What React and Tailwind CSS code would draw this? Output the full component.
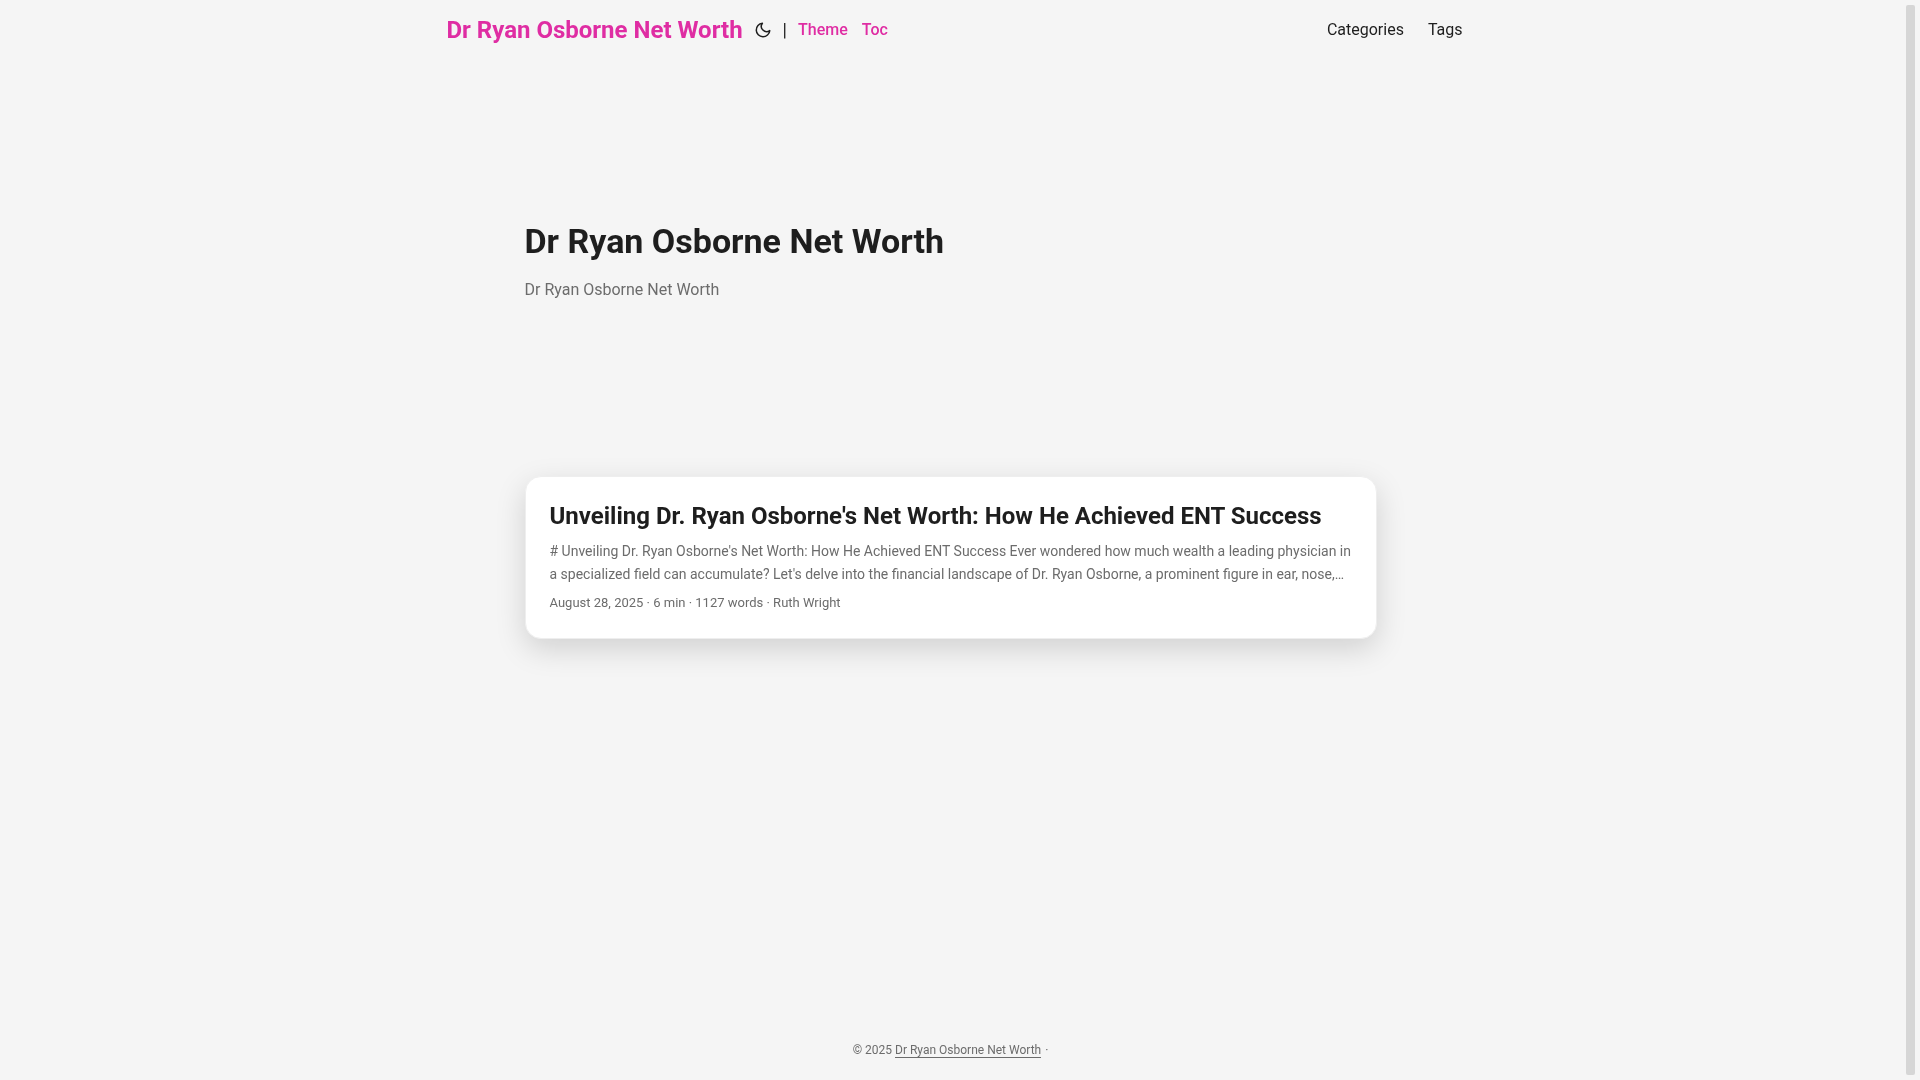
import React, { useState } from 'react';

const SITE_NAME = 'Dr Ryan Osborne Net Worth';

const quickLinks = [
  { label: 'Theme', href: '#theme' },
  { label: 'Toc', href: '#toc' },
];

const menu = [
  { label: 'Categories', href: '#categories' },
  { label: 'Tags', href: '#tags' },
];

const posts = [
  {
    href: '#post',
    title: "Unveiling Dr. Ryan Osborne's Net Worth: How He Achieved ENT Success",
    summary:
      "# Unveiling Dr. Ryan Osborne's Net Worth: How He Achieved ENT Success Ever wondered how much wealth a leading physician in a specialized field can accumulate? Let's delve into the financial landscape of Dr. Ryan Osborne, a prominent figure in ear, nose,…",
    meta: 'August 28, 2025 · 6 min · 1127 words · Ruth Wright',
  },
];

const MoonIcon = () => (
  <svg
    width="18"
    height="18"
    viewBox="0 0 24 24"
    fill="none"
    stroke="currentColor"
    strokeWidth="2"
    strokeLinecap="round"
    strokeLinejoin="round"
    aria-hidden="true"
  >
    <path d="M21 12.79A9 9 0 1 1 11.21 3 7 7 0 0 0 21 12.79z" />
  </svg>
);

const Header = ({ onToggle }) => (
  <header className="mx-auto flex h-[60px] w-full max-w-[1072px] items-center justify-between px-6">
    <div className="flex items-center pl-2">
      <a href="#home" className="text-2xl font-bold text-[#df2da3]">
        {SITE_NAME}
      </a>
      <div className="ml-[11px] flex items-center gap-[11px]">
        <button type="button" onClick={onToggle} aria-label="Toggle theme" className="cursor-pointer">
          <MoonIcon />
        </button>
        <span className="text-lg">|</span>
        <nav className="flex gap-[14px] font-medium text-[#df2da3]">
          {quickLinks.map((link) => (
            <a key={link.label} href={link.href}>
              {link.label}
            </a>
          ))}
        </nav>
      </div>
    </div>
    <ul className="flex gap-6">
      {menu.map((item) => (
        <li key={item.label}>
          <a href={item.href}>{item.label}</a>
        </li>
      ))}
    </ul>
  </header>
);

const PostCard = ({ post }) => (
  <article className="rounded-2xl border border-[#eeeeee] bg-white p-6 shadow-[0_10px_30px_rgba(0,0,0,0.15)]">
    <a href={post.href} className="block">
      <h2 className="text-2xl leading-[31px] font-bold">{post.title}</h2>
      <p className="mt-2 mb-[6px] text-sm leading-[23px] text-[#6c6c6c]">{post.summary}</p>
      <footer className="text-[13px] leading-[22px] text-[#6c6c6c]">{post.meta}</footer>
    </a>
  </article>
);

function App() {
  const [dark, setDark] = useState(false);

  return (
    <div
      className={`flex h-screen font-[Roboto,sans-serif] ${
        dark ? 'bg-[#1d1e20] text-[#dadadb]' : 'bg-[#f5f5f5] text-[#1e1e1e]'
      }`}
    >
      <div className="flex min-w-0 flex-1 flex-col will-change-transform">
        <Header onToggle={() => setDark(!dark)} />

        <main className="mx-auto w-full max-w-[900px] flex-1 p-6">
          <section className="mb-[38px] flex min-h-[354px] flex-col justify-center gap-[14px]">
            <h1 className="text-[34px] leading-[44px] font-bold">{SITE_NAME}</h1>
            <p className="leading-[26px] text-[#6c6c6c]">{SITE_NAME}</p>
          </section>
          {posts.map((post) => (
            <PostCard key={post.title} post={post} />
          ))}
        </main>

        <footer className="flex h-[60px] items-center justify-center gap-1 text-xs text-[#6c6c6c]">
          <span>
            © 2025{' '}
            <a href="#home" className="border-b border-[#6c6c6c]">
              {SITE_NAME}
            </a>
          </span>
          <span>·</span>
        </footer>
      </div>

      {/* scroll track */}
      <div className="flex w-[19px] p-[5px]" aria-hidden="true">
        <div className="flex-1 rounded-[2px] bg-[#d6d6d6]" />
      </div>
    </div>
  );
}

export default App;
